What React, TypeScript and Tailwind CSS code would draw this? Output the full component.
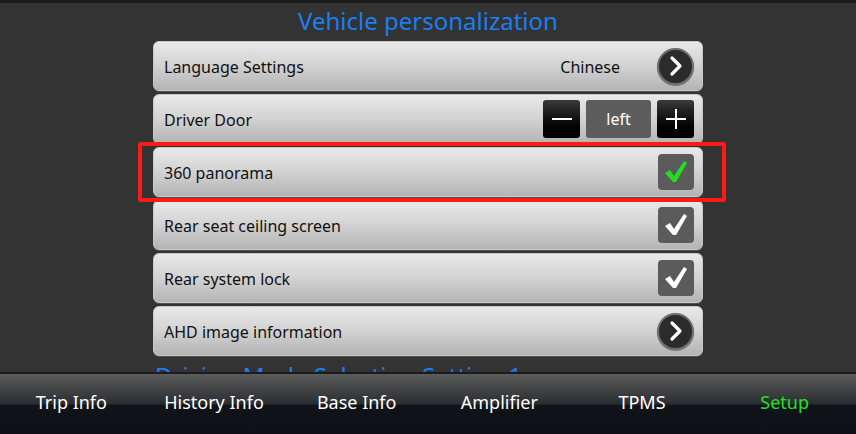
import React from 'react';

const font = { fontFamily: '"Noto Sans", "Open Sans", sans-serif' };

const Chevron: React.FC = () => (
  <div className="w-[37px] h-[37px] rounded-full bg-[#2b2b2b] border-2 border-[#6e6e6e] flex items-center justify-center shadow-[0_1px_1px_rgba(0,0,0,0.4)]">
    <svg width="20" height="22" viewBox="0 0 20 22">
      <path d="M6 3 L14 11 L6 19" fill="none" stroke="#fff" strokeWidth="3.2" strokeLinecap="round" strokeLinejoin="round" />
    </svg>
  </div>
);

const Check: React.FC<{ green?: boolean }> = ({ green }) => (
  <div className="w-[36px] h-[36px] rounded-[4px] bg-[#5b5b5b] flex items-center justify-center">
    <svg width="26" height="26" viewBox="0 0 26 26">
      <path
        d="M2 14 L7 11 L11 17 L21 2 L24 4 L13 23 L10 23 Z"
        fill={green ? '#22dd22' : '#ffffff'}
      />
    </svg>
  </div>
);

const BlackBtn: React.FC<{ children: React.ReactNode }> = ({ children }) => (
  <div className="w-[37px] h-[38px] rounded-[3px] bg-gradient-to-b from-[#3a3a3a] via-[#111] to-[#000] flex items-center justify-center">
    {children}
  </div>
);

const Row: React.FC<{ label: string; right: React.ReactNode; value?: string }> = ({ label, right, value }) => (
  <div className="h-[50px] rounded-[6px] bg-gradient-to-b from-[#e9e9e9] via-[#d2d2d2] to-[#b4b4b4] border border-[#c8c8c8] flex items-center pl-[10px] pr-[8px] shadow-[0_1px_0_rgba(255,255,255,0.15)]">
    <span className="text-[16px] text-[#111] flex-1 pt-[1px]">{label}</span>
    {value && <span className="text-[16px] text-[#111] mr-[37px] pt-[1px]">{value}</span>}
    {right}
  </div>
);

const tabs = ['Trip Info', 'History Info', 'Base Info', 'Amplifier', 'TPMS', 'Setup'];

export default function App() {
  return (
    <div className="w-[856px] h-[434px] bg-[#333333] flex flex-col overflow-hidden" style={font}>
      <div className="h-[3px] bg-[#1a1a1a]" />
      <div className="h-[369px] overflow-hidden flex flex-col items-center">
        <h1 className="text-[24px] leading-[36px] text-[#1a7ff0] mb-[2px]">Vehicle personalization</h1>
        <div className="w-[550px] flex flex-col gap-[3px]">
          <Row label="Language Settings" value="Chinese" right={<Chevron />} />
          <Row
            label="Driver Door"
            right={
              <div className="flex items-center gap-[6px]">
                <BlackBtn>
                  <div className="w-[20px] h-[2px] bg-white" />
                </BlackBtn>
                <div className="w-[65px] h-[38px] rounded-[3px] bg-[#5d5d5d] text-white text-[16px] flex items-center justify-center">left</div>
                <BlackBtn>
                  <svg width="22" height="22" viewBox="0 0 22 22">
                    <path d="M11 1 V21 M1 11 H21" stroke="#fff" strokeWidth="2" />
                  </svg>
                </BlackBtn>
              </div>
            }
          />
          <div className="relative">
            <div className="absolute -left-[15px] -right-[23px] -top-[5px] -bottom-[5px] border-[4px] border-[#ff1a1a] rounded-[3px]" />
            <Row label="360 panorama" right={<Check green />} />
          </div>
          <Row label="Rear seat ceiling screen" right={<Check />} />
          <Row label="Rear system lock" right={<Check />} />
          <Row label="AHD image information" right={<Chevron />} />
          {/* next section heading, scrolled mostly out of view */}
          <div className="h-[14px] overflow-hidden mt-[-1px]">
            <h2 className="text-[24px] leading-[36px] text-[#1a7ff0] pl-[2px]">Driving Mode Selection Setting 1</h2>
          </div>
        </div>
      </div>
      <div className="h-[2px] bg-[#1b1b1b]" />
      <div className="flex-1 grid grid-cols-6 bg-[linear-gradient(to_bottom,#5c5c5c_0%,#2a2c30_50%,#101318_52%,#0d1016_100%)]">
        {tabs.map(t => (
          <div key={t} className={`flex items-center justify-center pb-[4px] text-[18px] ${t === 'Setup' ? 'text-[#22e022]' : 'text-white'}`}>
            {t}
          </div>
        ))}
      </div>
    </div>
  );
}
